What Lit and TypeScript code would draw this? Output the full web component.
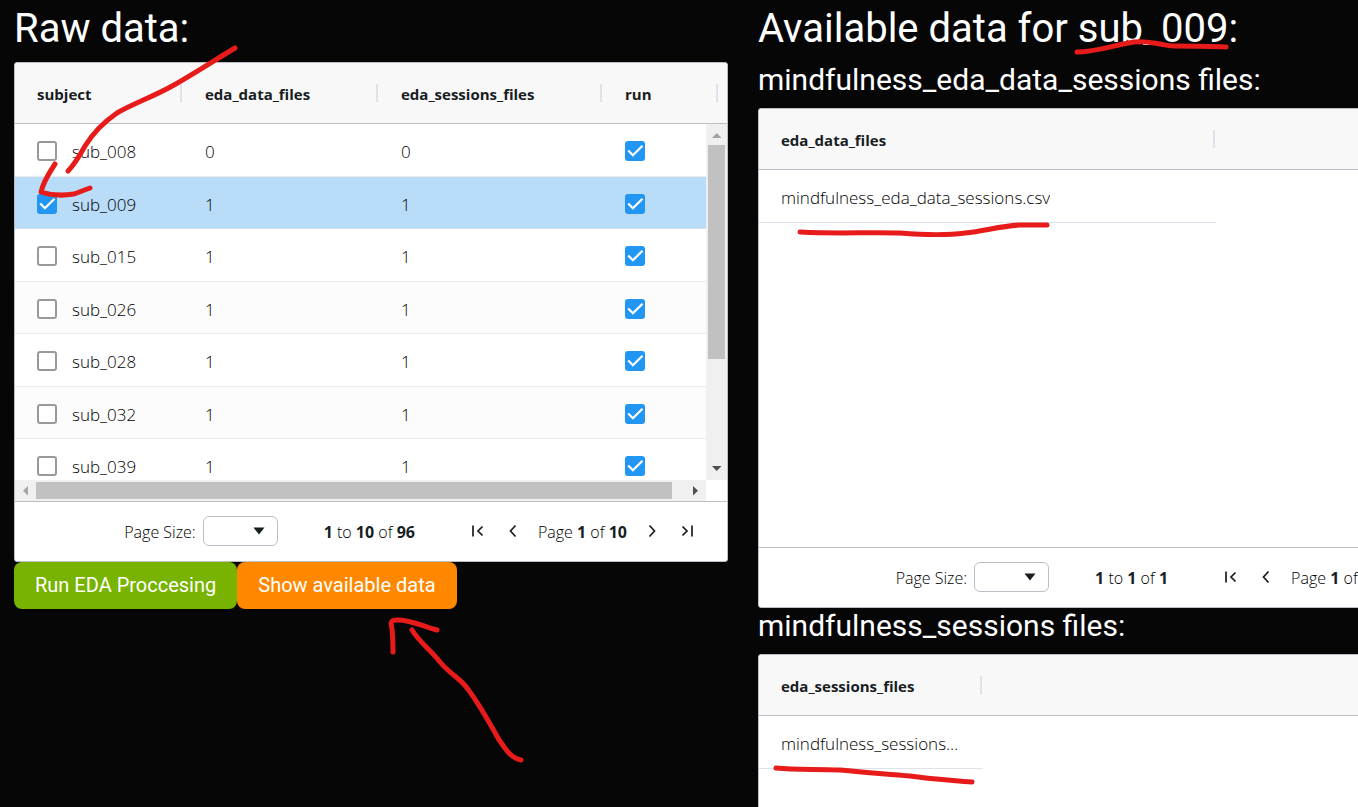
import { LitElement, html, css, svg, nothing } from "lit";
import { customElement, property } from "lit/decorators.js";
import { classMap } from "lit/directives/class-map.js";
import { styleMap } from "lit/directives/style-map.js";

type Cell = string | boolean;

interface Column {
  field: string;
  width: number;
}

interface Row {
  cells: Cell[];
  selected?: boolean;
}

const ICONS = {
  first: svg`<path d="M5 4.500v11M14.500 5.500 10 10l4.500 4.500" />`,
  previous: svg`<path d="M12.500 4.500 7.500 10l5 5.500" />`,
  next: svg`<path d="M7.500 4.500l5 5.500-5 5.500" />`,
  last: svg`<path d="M5.500 5.500 10 10l-4.500 4.500M15 4.500v11" />`,
};

@customElement("data-grid")
export class DataGrid extends LitElement {
  @property({ attribute: false }) columns: Column[] = [];
  @property({ attribute: false }) rows: Row[] = [];
  @property({ type: Boolean }) selectable = false;
  @property({ type: Boolean }) scrollable = false;
  @property({ type: Number }) total = 1;
  @property({ type: Number }) last = 1;
  @property({ type: Number }) pages = 1;

  static styles = css`
    :host {
      display: block;
      font-family: "Segoe UI", "Open Sans", "Noto Sans", sans-serif;
      font-size: 17px;
      font-weight: 300;
      color: #000;
    }
    .panel {
      background: #fff;
      border: 1px solid #babfc7;
      border-radius: 3px;
      overflow: hidden;
    }
    .view {
      display: grid;
      grid-template-columns: minmax(0, 1fr) auto;
      grid-template-rows: auto 356px 21px;
    }
    .table {
      display: contents;
    }
    .head {
      display: block;
      grid-column: 1 / -1;
      background: #f8f8f8;
      border-bottom: 1px solid #babfc7;
      overflow: hidden;
    }
    .body {
      display: block;
      overflow: hidden;
      grid-column: 1;
    }
    .plain .body {
      grid-row: 2 / 4;
    }
    .row {
      display: grid;
      box-sizing: border-box;
      justify-content: start;
      width: max-content;
    }
    .head .row {
      height: 60px;
    }
    .body .row {
      height: 53px;
      border-bottom: 1px solid #dde2eb;
    }
    .scrolling .body .row {
      border-bottom-color: #ececec;
    }
    .body .row:nth-child(even) {
      height: 52px;
      background: #fcfcfc;
    }
    .body .row.selected {
      background: #b9dcf9;
      border-bottom-color: #cfe0ee;
    }
    .th,
    .td {
      display: flex;
      align-items: center;
      gap: 15px;
      padding: 2px 22px 0;
      min-width: 0;
      text-align: left;
    }
    .th {
      position: relative;
      font-size: 15px;
      font-weight: 700;
      color: #181d1f;
    }
    .th::after {
      content: "";
      position: absolute;
      right: 1px;
      top: 21px;
      width: 2px;
      height: 18px;
      background: #dde2eb;
    }
    .text {
      overflow: hidden;
      text-overflow: ellipsis;
      white-space: nowrap;
      padding-top: 1px;
    }
    .check {
      appearance: none;
      flex: none;
      box-sizing: border-box;
      width: 20px;
      height: 20px;
      margin: 0;
      border: 2px solid #999;
      border-radius: 3px;
      background: #fff;
    }
    .check:checked {
      border: 0;
      background: #2196f3
        url("data:image/svg+xml,%3Csvg xmlns='http://www.w3.org/2000/svg' viewBox='0 0 20 20'%3E%3Cpath d='M3.200 9.500l4.700 4.700L17.500 4.700' fill='none' stroke='white' stroke-width='2.300'/%3E%3C/svg%3E");
    }
    .bar {
      display: flex;
      align-items: center;
      background: #f0f0f0;
    }
    .bar.vertical {
      grid-column: 2;
      grid-row: 2;
      width: 21px;
      flex-direction: column;
    }
    .bar.horizontal {
      grid-column: 1;
      grid-row: 3;
    }
    .arrow {
      flex: none;
      display: block;
      width: 21px;
      height: 21px;
      fill: #505050;
    }
    .arrow.off {
      fill: #a3a3a3;
    }
    .track {
      flex: 1;
      align-self: stretch;
      display: flex;
    }
    .vertical .track {
      flex-direction: column;
    }
    .thumb {
      background: #c1c1c1;
    }
    .vertical .thumb {
      margin: 0 2px;
      height: 68%;
    }
    .horizontal .thumb {
      margin: 2px 0;
      width: 98%;
    }
    .pager {
      display: flex;
      justify-content: flex-end;
      align-items: center;
      height: 60px;
      box-sizing: border-box;
      border-top: 1px solid #babfc7;
      padding: 0 30px 2px 0;
      font-size: 16px;
      white-space: nowrap;
    }
    .pager b {
      font-weight: 700;
      color: #181d1f;
    }
    .size {
      display: flex;
      align-items: center;
      gap: 7px;
      margin-right: 46px;
    }
    .select {
      appearance: none;
      box-sizing: border-box;
      width: 75px;
      height: 30px;
      border: 1px solid #babfc7;
      border-radius: 6px;
      background: #fff
        url("data:image/svg+xml,%3Csvg xmlns='http://www.w3.org/2000/svg' viewBox='0 0 12 8'%3E%3Cpath d='M0.500 0.500h11L6 7.500z' fill='%23181d1f'/%3E%3C/svg%3E")
        no-repeat right 12px center / 12px 8px;
    }
    .caption {
      padding-top: 3px;
    }
    .summary {
      margin-right: 53px;
    }
    .pages {
      display: flex;
      align-items: center;
      gap: 15px;
    }
    .step {
      display: block;
      padding: 0;
      border: 0;
      background: none;
      width: 20px;
      height: 20px;
    }
    .icon {
      display: block;
      width: 20px;
      height: 20px;
      fill: none;
      stroke: #181d1f;
      stroke-width: 1.7;
    }
  `;

  private get template() {
    return styleMap({ gridTemplateColumns: this.columns.map((c) => `${c.width}px`).join(" ") });
  }

  private cell(value: Cell, index: number, row: Row) {
    const name = String(row.cells[0]);
    if (typeof value === "boolean") {
      return html`<td class="td">
        <input class="check" type="checkbox" .checked=${value} aria-label=${`Run ${name}`} />
      </td>`;
    }
    return html`<td class="td">
      ${index === 0 && this.selectable
        ? html`<input class="check" type="checkbox" .checked=${!!row.selected} aria-label=${`Select ${name}`} />`
        : nothing}
      <span class="text">${value}</span>
    </td>`;
  }

  private step(icon: keyof typeof ICONS) {
    return html`<button class="step" type="button" aria-label=${`${icon} page`}>
      <svg class="icon" viewBox="0 0 20 20">${ICONS[icon]}</svg>
    </button>`;
  }

  private bars() {
    return html`
      <div class="bar vertical">
        <svg class="arrow off" viewBox="0 0 21 21"><path d="M6 14h9.500L10.700 9z" /></svg>
        <div class="track"><div class="thumb"></div></div>
        <svg class="arrow" viewBox="0 0 21 21"><path d="M6 7h9.500l-4.800 5z" /></svg>
      </div>
      <div class="bar horizontal">
        <svg class="arrow off" viewBox="0 0 21 21"><path d="M13 6v9.500L8 10.700z" /></svg>
        <div class="track"><div class="thumb"></div></div>
        <svg class="arrow" viewBox="0 0 21 21"><path d="M8 6v9.500l5-4.800z" /></svg>
      </div>
    `;
  }

  render() {
    return html`
      <div class="panel">
        <div class=${classMap({ view: true, scrolling: this.scrollable, plain: !this.scrollable })}>
          <table class="table">
            <thead class="head">
              <tr class="row" style=${this.template}>
                ${this.columns.map((c) => html`<th class="th" scope="col">${c.field}</th>`)}
              </tr>
            </thead>
            <tbody class="body">
              ${this.rows.map(
                (row) => html`<tr
                  class=${classMap({ row: true, selected: !!row.selected })}
                  style=${this.template}
                >
                  ${row.cells.map((v, i) => this.cell(v, i, row))}
                </tr>`
              )}
            </tbody>
          </table>
          ${this.scrollable ? this.bars() : nothing}
        </div>
        <div class="pager">
          <div class="size">
            <label class="caption" for="size">Page Size:</label>
            <select class="select" id="size"><option></option></select>
          </div>
          <span class="caption summary"><b>1</b> to <b>${this.last}</b> of <b>${this.total}</b></span>
          <div class="pages">
            ${this.step("first")} ${this.step("previous")}
            <span class="caption">Page <b>1</b> of <b>${this.pages}</b></span>
            ${this.step("next")} ${this.step("last")}
          </div>
        </div>
      </div>
    `;
  }
}

const SUBJECTS = ["008", "009", "015", "026", "028", "032", "039"];

@customElement("app-root")
export class AppRoot extends LitElement {
  static styles = css`
    :host {
      display: block;
      position: relative;
      box-sizing: border-box;
      height: 100vh;
      overflow: hidden;
      background: #060606;
      color: #fff;
      font-family: Roboto, sans-serif;
    }
    .layout {
      display: grid;
      grid-template-columns: repeat(2, minmax(714px, 1fr));
      gap: 30px;
      padding: 5px 14px 0;
    }
    .title,
    .subtitle {
      margin: 0;
      font-weight: 400;
      white-space: nowrap;
    }
    .title {
      font-size: 40px;
      line-height: 48px;
      padding-bottom: 9px;
    }
    .subtitle {
      font-size: 30px;
      line-height: 36px;
      padding-bottom: 10px;
    }
    .actions {
      display: flex;
    }
    .button {
      border: 0;
      border-radius: 8px;
      padding: 0 21px 2px;
      height: 47px;
      font: 400 20px/30px Roboto, sans-serif;
      color: #fff;
      background: #77b300;
    }
    .button.show {
      background: #ff8800;
    }
    .marks {
      position: absolute;
      left: 0;
      top: 0;
      width: 1358px;
      height: 807px;
      pointer-events: none;
      fill: none;
      stroke: #e81b1b;
      stroke-width: 5;
      stroke-linecap: round;
      stroke-linejoin: round;
    }
  `;

  private rawColumns: Column[] = [
    { field: "subject", width: 168 },
    { field: "eda_data_files", width: 196 },
    { field: "eda_sessions_files", width: 224 },
    { field: "run", width: 116 },
  ];

  private rawRows: Row[] = SUBJECTS.map((id) => {
    const count = id === "008" ? "0" : "1";
    return { cells: [`sub_${id}`, count, count, true], selected: id === "009" };
  });

  render() {
    return html`
      <main class="layout">
        <section>
          <h1 class="title">Raw data:</h1>
          <data-grid
            selectable
            scrollable
            .columns=${this.rawColumns}
            .rows=${this.rawRows}
            .last=${10}
            .total=${96}
            .pages=${10}
          ></data-grid>
          <div class="actions">
            <button class="button" type="button">Run EDA Proccesing</button>
            <button class="button show" type="button">Show available data</button>
          </div>
        </section>
        <section>
          <h1 class="title">Available data for sub_009:</h1>
          <h2 class="subtitle">mindfulness_eda_data_sessions files:</h2>
          <data-grid
            .columns=${[{ field: "eda_data_files", width: 457 }]}
            .rows=${[{ cells: ["mindfulness_eda_data_sessions.csv"] }]}
          ></data-grid>
          <h2 class="subtitle">mindfulness_sessions files:</h2>
          <data-grid
            .columns=${[{ field: "eda_sessions_files", width: 224 }]}
            .rows=${[{ cells: ["mindfulness_sessions_file.csv"] }]}
          ></data-grid>
        </section>
      </main>
      <svg class="marks" viewBox="0 0 1358 807" aria-hidden="true">
        <path d="M235 48C215 60 195 73 174 85C155 96 132 104 117 113C104 122 93 133 85 146C80 155 75 164 68 171" />
        <path d="M55 164C49 173 43 183 41 192C50 195 62 196 74 194C80 192 84 190 90 188" />
        <path d="M1077 52C1096 52 1114 45 1134 42C1146 41 1153 43 1160 44C1165 45 1168 46 1174 46C1190 46 1208 46 1226 47" />
        <path d="M800 232C840 234 865 232 900 233C925 235 950 235 965 233C985 231 1000 226 1020 225L1047 225" />
        <path d="M776 768C795 770 815 769 840 770C870 773 890 774 910 776C930 779 950 780 972 782" />
        <path d="M393 652C393 643 393 632 391 623C392 620 394 620 398 620C412 620 424 627 437 630" />
        <path d="M412 630C420 643 431 650 440 662C451 675 460 678 467 688C478 702 488 720 498 738C506 750 511 758 521 760" />
      </svg>
    `;
  }
}
